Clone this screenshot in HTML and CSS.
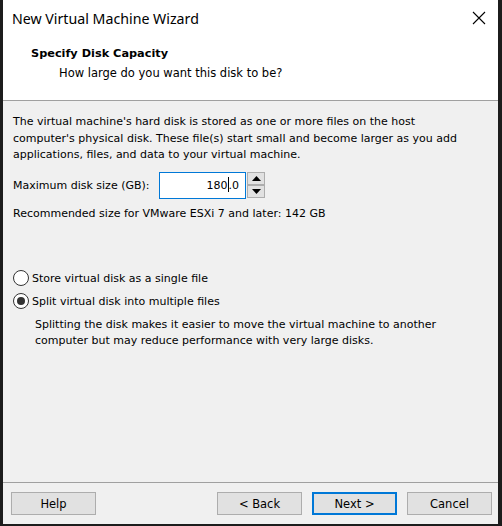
FILE: index.html
```html
<!DOCTYPE html>
<html lang="en">
<head>
    <meta charset="UTF-8">
    <title>New Virtual Machine Wizard</title>
    <link rel="stylesheet" href="styles.css">
</head>
<body>
    <div class="window">
        <div class="header">
            <div class="titlebar">
                <span class="title">New Virtual Machine Wizard</span>
                <svg class="close" width="14" height="14" viewBox="0 0 14 14">
                    <path d="M1 1 L13 13 M13 1 L1 13" stroke="#000" stroke-width="1.1" fill="none"/>
                </svg>
            </div>
            <h2>Specify Disk Capacity</h2>
            <p class="sub">How large do you want this disk to be?</p>
        </div>
        <div class="content">
            <p class="intro">The virtual machine's hard disk is stored as one or more files on the host computer's physical disk. These file(s) start small and become larger as you add applications, files, and data to your virtual machine.</p>
            <div class="size-row">
                <label>Maximum disk size (GB):</label>
                <div class="spin">
                    <div class="spin-input">180<span class="caret"></span>.0</div>
                    <div class="spin-btns">
                        <div class="spin-btn"><svg width="9" height="5" viewBox="0 0 9 5"><path d="M4.5 0 L9 5 L0 5 Z" fill="#000"/></svg></div>
                        <div class="spin-btn"><svg width="9" height="5" viewBox="0 0 9 5"><path d="M0 0 L9 0 L4.5 5 Z" fill="#000"/></svg></div>
                    </div>
                </div>
            </div>
            <p class="recommend">Recommended size for VMware ESXi 7 and later: 142 GB</p>
            <div class="options">
                <div class="radio"><span class="dot"></span>Store virtual disk as a single file</div>
                <div class="radio checked"><span class="dot"></span>Split virtual disk into multiple files</div>
                <p class="note">Splitting the disk makes it easier to move the virtual machine to another computer but may reduce performance with very large disks.</p>
            </div>
        </div>
        <div class="footer">
            <button class="btn">Help</button>
            <div class="nav-btns">
                <button class="btn">&lt; Back</button>
                <button class="btn primary">Next &gt;</button>
                <button class="btn">Cancel</button>
            </div>
        </div>
    </div>
</body>
</html>
```

FILE: styles.css
```css
* {
    margin: 0;
    padding: 0;
    box-sizing: border-box;
}

body {
    background: #1c1c1c;
    font-family: Tahoma, "DejaVu Sans", sans-serif;
    font-size: 11px;
    color: #000;
}

.window {
    margin-left: 3px;
    width: 495px;
    height: 524px;
    background: #f0f0f0;
    display: flex;
    flex-direction: column;
}

.header {
    background: #fff;
    height: 101px;
    border-bottom: 1px solid #a0a0a0;
}

.titlebar {
    display: flex;
    justify-content: space-between;
    align-items: center;
    height: 36px;
    padding-left: 9px;
    padding-right: 12px;
}

.title {
    font-family: "Noto Sans", "Liberation Sans", sans-serif;
    font-size: 14.2px;
}

.header h2 {
    font-size: 11.3px;
    font-weight: bold;
    margin-left: 28px;
    margin-top: 11px;
}

.sub {
    margin-left: 56px;
    margin-top: 6px;
    font-size: 11.5px;
}

.content {
    flex: 1;
    padding: 13px 20px 0 10px;
}

.intro {
    line-height: 16.5px;
}

.size-row {
    display: flex;
    align-items: center;
    margin-top: 8px;
}

.size-row label {
    width: 146px;
    white-space: nowrap;
}

.spin {
    display: flex;
    align-items: center;
}

.spin-input {
    width: 87px;
    height: 27px;
    background: #fff;
    border: 1px solid #0078d7;
    text-align: right;
    padding-right: 6px;
    line-height: 25px;
}

.caret {
    display: inline-block;
    width: 1px;
    height: 15px;
    background: #000;
    vertical-align: -3px;
}

.spin-btns {
    display: flex;
    flex-direction: column;
    margin-left: 1px;
}

.spin-btn {
    width: 18px;
    height: 13px;
    background: #e1e1e1;
    border: 1px solid #adadad;
    display: flex;
    align-items: center;
    justify-content: center;
}

.recommend {
    margin-top: 8px;
}

.options {
    margin-top: 47px;
}

.radio {
    display: flex;
    align-items: center;
    height: 23px;
}

.dot {
    width: 16px;
    height: 16px;
    border: 1px solid #333;
    border-radius: 50%;
    background: #fff;
    margin-right: 3px;
    position: relative;
}

.checked .dot::after {
    content: "";
    position: absolute;
    left: 3px;
    top: 3px;
    width: 8px;
    height: 8px;
    border-radius: 50%;
    background: #333;
}

.note {
    margin-left: 22px;
    margin-top: 4px;
    line-height: 16px;
}

.footer {
    height: 42px;
    border-top: 1px solid #a0a0a0;
    display: flex;
    justify-content: space-between;
    align-items: center;
    padding: 0 6px 0 8px;
}

.nav-btns {
    display: flex;
    gap: 10px;
}

.btn {
    width: 85px;
    height: 23px;
    background: #e1e1e1;
    border: 1px solid #adadad;
    font-family: Tahoma, "DejaVu Sans", sans-serif;
    font-size: 11.5px;
    color: #000;
}

.btn.primary {
    border: 2px solid #0078d7;
}
```
